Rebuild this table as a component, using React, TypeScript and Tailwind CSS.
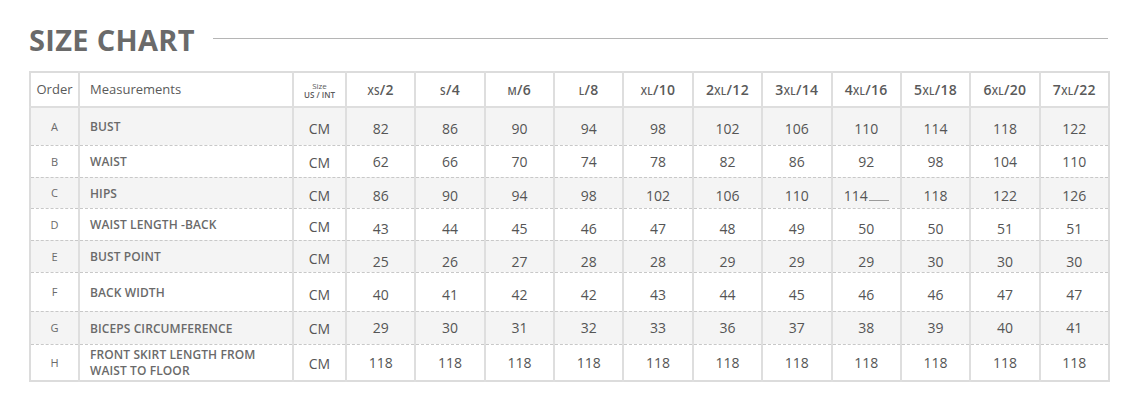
import React from 'react';

const SIZES = ['xs/2', 's/4', 'm/6', 'l/8', 'xl/10', '2xl/12', '3xl/14', '4xl/16', '5xl/18', '6xl/20', '7xl/22'];

interface Row {
  order: string;
  label: string[];
  values: string[];
  height: string;
  bg: string;
  shift: string;
}

const ROWS: Row[] = [
  { order: 'A', label: ['BUST'], values: ['82', '86', '90', '94', '98', '102', '106', '110', '114', '118', '122'], height: 'h-[38px]', bg: 'bg-[#f4f4f4]', shift: 'pt-[5px]' },
  { order: 'B', label: ['WAIST'], values: ['62', '66', '70', '74', '78', '82', '86', '92', '98', '104', '110'], height: 'h-[32px]', bg: 'bg-white', shift: 'pt-0' },
  { order: 'C', label: ['HIPS'], values: ['86', '90', '94', '98', '102', '106', '110', '114', '118', '122', '126'], height: 'h-[31px]', bg: 'bg-[#f4f4f4]', shift: 'pt-[6px]' },
  { order: 'D', label: ['WAIST LENGTH -BACK'], values: ['43', '44', '45', '46', '47', '48', '49', '50', '50', '51', '51'], height: 'h-[32px]', bg: 'bg-white', shift: 'pt-[8px]' },
  { order: 'E', label: ['BUST POINT'], values: ['25', '26', '27', '28', '28', '29', '29', '29', '30', '30', '30'], height: 'h-[32px]', bg: 'bg-[#f4f4f4]', shift: 'pt-[10px]' },
  { order: 'F', label: ['BACK WIDTH'], values: ['40', '41', '42', '42', '43', '44', '45', '46', '46', '47', '47'], height: 'h-[39px]', bg: 'bg-white', shift: 'pt-[6px]' },
  { order: 'G', label: ['BICEPS CIRCUMFERENCE'], values: ['29', '30', '31', '32', '33', '36', '37', '38', '39', '40', '41'], height: 'h-[33px]', bg: 'bg-[#f4f4f4]', shift: 'pt-0' },
  { order: 'H', label: ['FRONT SKIRT LENGTH FROM', 'WAIST TO FLOOR'], values: ['118', '118', '118', '118', '118', '118', '118', '118', '118', '118', '118'], height: 'h-[36px]', bg: 'bg-white', shift: 'pt-0' },
];

const vline = 'border-l-2 border-solid border-l-[#dedede]';

export default function App() {
  return (
    <div className="w-[1124px] h-[404px] bg-white text-[#5a5a5a] font-['Open_Sans',sans-serif]">
      <div className="flex items-center gap-[18px] pl-[29px] pr-[16px] pt-[22px] h-[56px]">
        <h1 className="text-[29px] font-bold text-[#6a6a6a] tracking-[0.3px] leading-none">SIZE CHART</h1>
        <div className="flex-1 h-px bg-[#b5b5b5] mt-[-2px]" />
      </div>

      <div className="pl-[29px] pt-[15px]">
        <table className="table-fixed border-collapse w-[1081px] border-2 border-[#dcdcdc]">
          <colgroup>
            <col className="w-[49px]" />
            <col className="w-[214px]" />
            <col className="w-[53px]" />
            {SIZES.map((s) => (
              <col key={s} />
            ))}
          </colgroup>
          <thead>
            <tr className="h-[35px] bg-white border-b-2 border-[#dedede]">
              <th className="text-[13px] font-normal text-center">Order</th>
              <th className={`${vline} text-[13px] font-normal text-left pl-[10px]`}>Measurements</th>
              <th className={`${vline} text-center font-semibold text-[8px] leading-[9px]`}>
                <div className="font-normal">Size</div>
                <div>US / INT</div>
              </th>
              {SIZES.map((s) => (
                <th key={s} className={`${vline} text-[14px] font-semibold text-center [font-variant:small-caps] tracking-[0.3px]`}>
                  {s}
                </th>
              ))}
            </tr>
          </thead>
          <tbody>
            {ROWS.map((r, i) => (
              <tr key={r.order} className={`${r.height} ${r.bg} ${i < ROWS.length - 1 ? 'border-b border-dashed border-b-[#c8c8c8]' : ''}`}>
                <td className="text-center text-[11px] text-[#6a6a6a] pt-[2px]">{r.order}</td>
                <td className={`${vline} pl-[10px] text-[12px] font-semibold text-[#6a6a6a] pt-[2px] tracking-[0.1px]`}>
                  {r.label.map((l) => (
                    <div key={l} className={`${r.label.length > 1 ? 'leading-[16.5px]' : 'leading-[16px]'} whitespace-nowrap`}>
                      {l}
                    </div>
                  ))}
                </td>
                <td className={`${vline} text-center text-[14px] text-[#555] ${r.shift === 'pt-0' ? 'pt-[2px]' : 'pt-[5px]'}`}>CM</td>
                {r.values.map((v, j) => (
                  <td key={j} className={`${vline} text-center text-[14px] text-[#555] ${r.shift}`}>
                    {r.order === 'C' && j === 7 ? (
                      <span className="inline-flex items-baseline">
                        {v}
                        <span className="inline-block w-[20px] border-b border-[#9a9a9a] ml-[1px]" />
                      </span>
                    ) : (
                      v
                    )}
                  </td>
                ))}
              </tr>
            ))}
          </tbody>
        </table>
      </div>
    </div>
  );
}
